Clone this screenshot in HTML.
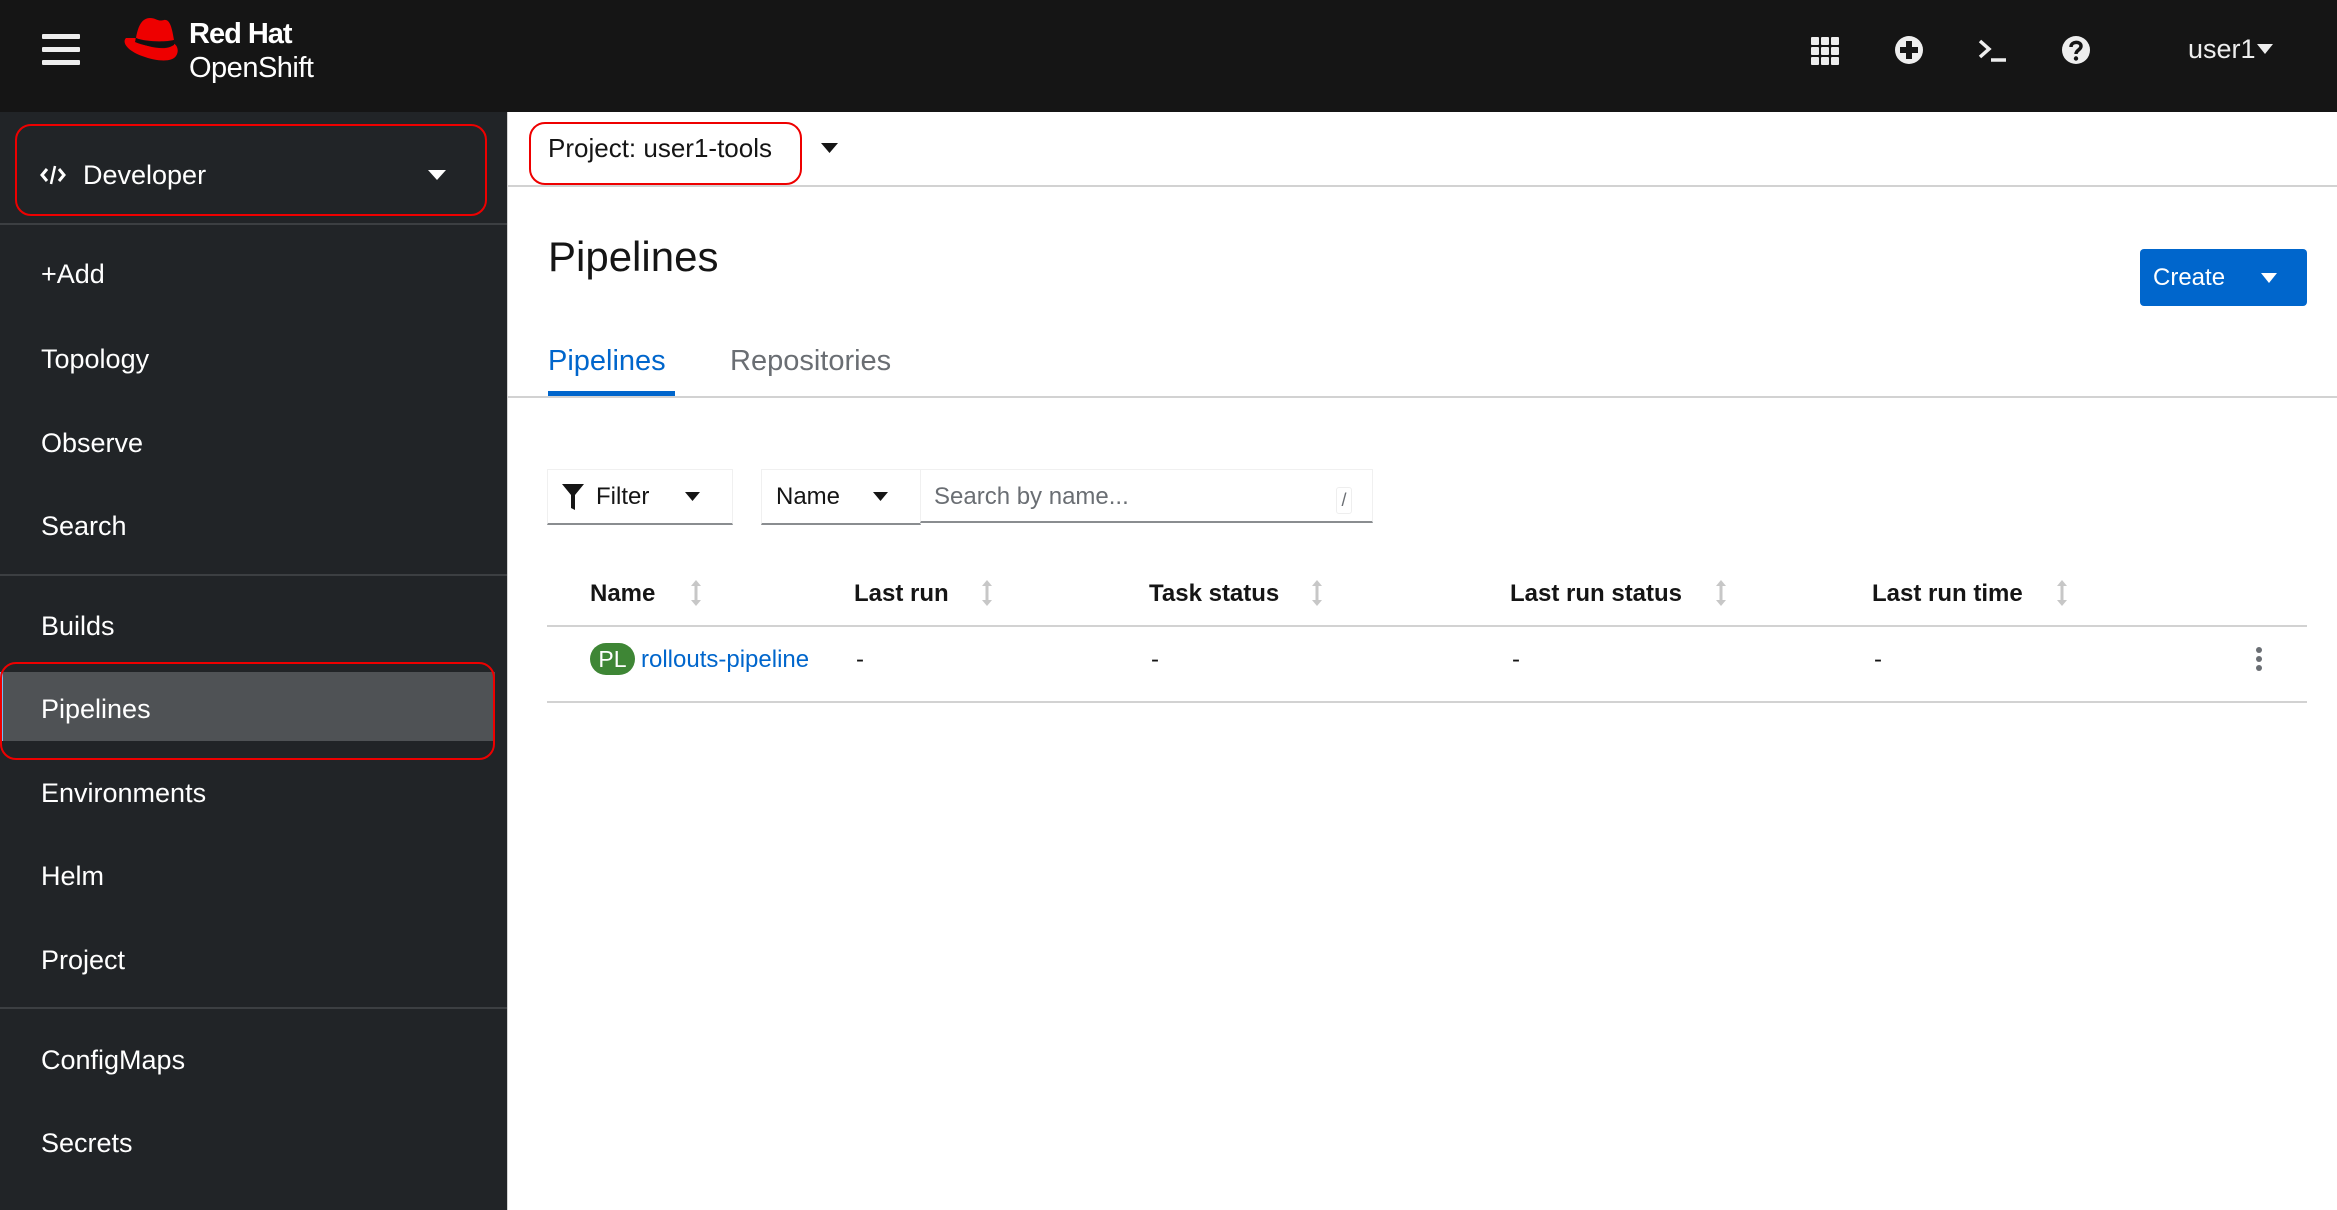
<!DOCTYPE html>
<html><head><meta charset="utf-8"><style>
*{box-sizing:border-box;margin:0;padding:0}
body{width:2337px;height:1210px;overflow:hidden;font-family:"Liberation Sans",sans-serif;background:#fff;position:relative;color:#151515}
.abs{position:absolute}
#top{left:0;top:0;width:2337px;height:112px;background:#151515}
#side{left:0;top:112px;width:507px;height:1098px;background:#212427}
.nav{position:absolute;left:41px;color:#fff;font-size:27px;line-height:34px;margin-top:3px}
.sep{position:absolute;left:0;width:507px;height:2px;background:#3c3f42}
.red{position:absolute;border:2px solid #e00;border-radius:16px}
.th{position:absolute;top:579px;font-size:24px;font-weight:bold;line-height:30px}
.sort{position:absolute;top:580px;width:10px;height:26px}
.td{position:absolute;top:645px;font-size:24px;line-height:30px}
</style></head><body>
<div id="top" class="abs">
  <div class="abs" style="left:42px;top:34px;width:38px;height:5px;background:#eee;border-radius:1px"></div>
  <div class="abs" style="left:42px;top:47px;width:38px;height:5px;background:#eee;border-radius:1px"></div>
  <div class="abs" style="left:42px;top:60px;width:38px;height:5px;background:#eee;border-radius:1px"></div>
  <svg class="abs" style="left:122px;top:16px" width="62" height="48" viewBox="0 0 62 48">
    <path d="M14 22 C16 10 20 2 28 2 C34 2 36 6 42 4 C48 3 50 12 52 24 C44 26 24 26 14 22Z" fill="#e00"/>
    <path d="M4 22 C0 26 4 34 20 40 C36 46 50 46 54 40 C58 34 54 28 52 28 C50 32 40 34 26 30 C16 27 12 24 14 22 Z" fill="#e00"/>
    <path d="M14 22 C24 27 44 28 52 24 L52 29 C44 33 24 31 13 26Z" fill="#111"/>
  </svg>
  <div class="abs" style="left:189px;top:18px;color:#fff;font-size:29px;font-weight:bold;letter-spacing:-1px;line-height:32px">Red Hat</div>
  <div class="abs" style="left:189px;top:52px;color:#fff;font-size:29px;letter-spacing:-0.5px;line-height:32px">OpenShift</div>
  <svg class="abs" style="left:1811px;top:37px" width="30" height="30" viewBox="0 0 30 30" fill="#eee">
    <rect x="0" y="0" width="8" height="8" rx="1"/><rect x="10" y="0" width="8" height="8" rx="1"/><rect x="20" y="0" width="8" height="8" rx="1"/>
    <rect x="0" y="10" width="8" height="8" rx="1"/><rect x="10" y="10" width="8" height="8" rx="1"/><rect x="20" y="10" width="8" height="8" rx="1"/>
    <rect x="0" y="20" width="8" height="8" rx="1"/><rect x="10" y="20" width="8" height="8" rx="1"/><rect x="20" y="20" width="8" height="8" rx="1"/>
  </svg>
  <svg class="abs" style="left:1894px;top:35px" width="30" height="30" viewBox="0 0 30 30"><circle cx="15" cy="15" r="14" fill="#eee"/><rect x="12" y="6" width="6" height="18" fill="#151515"/><rect x="6" y="12" width="18" height="6" fill="#151515"/></svg>
  <svg class="abs" style="left:1978px;top:38px" width="30" height="30" viewBox="0 0 30 30" fill="none" stroke="#eee" stroke-width="3.5"><path d="M2 3 L11 11 L2 19"/><path d="M13 22 H28"/></svg>
  <svg class="abs" style="left:2061px;top:35px" width="30" height="30" viewBox="0 0 30 30"><circle cx="15" cy="15" r="14" fill="#eee"/><path d="M10 12 C10 6 20 6 20 11 C20 15 15 15 15 19" stroke="#151515" stroke-width="3.5" fill="none"/><circle cx="15" cy="23.5" r="2.2" fill="#151515"/></svg>
  <div class="abs" style="left:2188px;top:33px;color:#eee;font-size:27px;line-height:32px">user1</div>
  <svg class="abs" style="left:2257px;top:44px" width="16" height="10"><path d="M0 0 H16 L8 10Z" fill="#eee"/></svg>
</div>
<div id="side" class="abs">
  <div class="red" style="left:15px;top:12px;width:472px;height:92px"></div>
  <svg class="abs" style="left:40px;top:53px" width="26" height="20" viewBox="0 0 26 20" fill="none" stroke="#fff" stroke-width="3"><path d="M7 4 L2 10 L7 16"/><path d="M19 4 L24 10 L19 16"/><path d="M15 1 L11 19" stroke-width="2.5"/></svg>
  <div class="nav" style="left:83px;top:43px">Developer</div>
  <svg class="abs" style="left:428px;top:58px" width="18" height="10"><path d="M0 0 H18 L9 10Z" fill="#fff"/></svg>
  <div class="sep" style="top:111px"></div>
  <div class="nav" style="top:142px">+Add</div>
  <div class="nav" style="top:227px">Topology</div>
  <div class="nav" style="top:311px">Observe</div>
  <div class="nav" style="top:394px">Search</div>
  <div class="sep" style="top:462px"></div>
  <div class="nav" style="top:494px">Builds</div>
  <div class="abs" style="left:0;top:560px;width:495px;height:69px;background:#4f5255"></div>
  <div class="abs" style="left:0;top:560px;width:3px;height:69px;background:#73bcf7"></div>
  <div class="red" style="left:0;top:550px;width:495px;height:98px"></div>
  <div class="nav" style="top:577px">Pipelines</div>
  <div class="nav" style="top:661px">Environments</div>
  <div class="nav" style="top:744px">Helm</div>
  <div class="nav" style="top:828px">Project</div>
  <div class="sep" style="top:895px"></div>
  <div class="nav" style="top:928px">ConfigMaps</div>
  <div class="nav" style="top:1011px">Secrets</div>
</div>
<div class="abs" style="left:507px;top:112px;width:1830px;height:1098px;border-left:1px solid #d2d2d2"></div>
<div class="abs" style="left:507px;top:185px;width:1830px;height:2px;background:#d2d2d2"></div>
<div class="red" style="left:529px;top:122px;width:273px;height:63px"></div>
<div class="abs" style="left:548px;top:132px;font-size:26px;line-height:32px">Project: user1-tools</div>
<svg class="abs" style="left:821px;top:143px" width="17" height="10"><path d="M0 0 H17 L8.5 10Z" fill="#151515"/></svg>
<div class="abs" style="left:548px;top:233px;font-size:42px;line-height:48px">Pipelines</div>
<div class="abs" style="left:2140px;top:249px;width:167px;height:57px;background:#0066cc;border-radius:4px"></div>
<div class="abs" style="left:2153px;top:263px;color:#fff;font-size:24px;line-height:30px">Create</div>
<svg class="abs" style="left:2261px;top:273px" width="16" height="10"><path d="M0 0 H16 L8 10Z" fill="#fff"/></svg>
<div class="abs" style="left:548px;top:344px;font-size:29px;line-height:34px;color:#0066cc">Pipelines</div>
<div class="abs" style="left:730px;top:344px;font-size:29px;line-height:34px;color:#6a6e73">Repositories</div>
<div class="abs" style="left:507px;top:396px;width:1830px;height:2px;background:#d2d2d2"></div>
<div class="abs" style="left:548px;top:391px;width:127px;height:5px;background:#0066cc"></div>
<div class="abs" style="left:547px;top:469px;width:186px;height:56px;border:1px solid #f0f0f0;border-bottom:2px solid #8a8d90"></div>
<svg class="abs" style="left:562px;top:484px" width="22" height="26" viewBox="0 0 22 26"><path d="M0 0 H22 L13 11 V26 L9 24 V11Z" fill="#151515"/></svg>
<div class="abs" style="left:596px;top:482px;font-size:24px;line-height:30px">Filter</div>
<svg class="abs" style="left:685px;top:492px" width="15" height="9"><path d="M0 0 H15 L7.5 9Z" fill="#151515"/></svg>
<div class="abs" style="left:761px;top:469px;width:160px;height:56px;border:1px solid #f0f0f0;border-bottom:2px solid #8a8d90"></div>
<div class="abs" style="left:776px;top:482px;font-size:24px;line-height:30px">Name</div>
<svg class="abs" style="left:873px;top:492px" width="15" height="9"><path d="M0 0 H15 L7.5 9Z" fill="#151515"/></svg>
<div class="abs" style="left:920px;top:469px;width:453px;height:54px;border:1px solid #f0f0f0;border-bottom:2px solid #8a8d90"></div>
<div class="abs" style="left:934px;top:482px;font-size:24px;line-height:30px;color:#6a6e73">Search by name...</div>
<div class="abs" style="left:1336px;top:487px;width:16px;height:27px;border:1px solid #eee;border-radius:3px;font-size:18px;color:#6a6e73;text-align:center;line-height:25px">/</div>
<div class="th" style="left:590px">Name</div>
<div class="th" style="left:854px">Last run</div>
<div class="th" style="left:1149px">Task status</div>
<div class="th" style="left:1510px">Last run status</div>
<div class="th" style="left:1872px">Last run time</div>
<svg class="sort" style="left:691px" viewBox="0 0 10 26"><path d="M5 0 L10 6 H6.5 V20 H10 L5 26 L0 20 H3.5 V6 H0Z" fill="#c7c7c7"/></svg>
<svg class="sort" style="left:982px" viewBox="0 0 10 26"><path d="M5 0 L10 6 H6.5 V20 H10 L5 26 L0 20 H3.5 V6 H0Z" fill="#c7c7c7"/></svg>
<svg class="sort" style="left:1312px" viewBox="0 0 10 26"><path d="M5 0 L10 6 H6.5 V20 H10 L5 26 L0 20 H3.5 V6 H0Z" fill="#c7c7c7"/></svg>
<svg class="sort" style="left:1716px" viewBox="0 0 10 26"><path d="M5 0 L10 6 H6.5 V20 H10 L5 26 L0 20 H3.5 V6 H0Z" fill="#c7c7c7"/></svg>
<svg class="sort" style="left:2057px" viewBox="0 0 10 26"><path d="M5 0 L10 6 H6.5 V20 H10 L5 26 L0 20 H3.5 V6 H0Z" fill="#c7c7c7"/></svg>
<div class="abs" style="left:547px;top:625px;width:1760px;height:2px;background:#d2d2d2"></div>
<div class="abs" style="left:590px;top:643px;width:45px;height:32px;background:#3e8635;border-radius:16px;color:#fff;font-size:23px;line-height:32px;text-align:center">PL</div>
<div class="td" style="left:641px;color:#0066cc">rollouts-pipeline</div>
<div class="td" style="left:856px">-</div>
<div class="td" style="left:1151px">-</div>
<div class="td" style="left:1512px">-</div>
<div class="td" style="left:1874px">-</div>
<svg class="abs" style="left:2255px;top:646px" width="8" height="26"><circle cx="4" cy="4" r="3" fill="#6a6e73"/><circle cx="4" cy="13" r="3" fill="#6a6e73"/><circle cx="4" cy="22" r="3" fill="#6a6e73"/></svg>
<div class="abs" style="left:547px;top:701px;width:1760px;height:2px;background:#d2d2d2"></div>
</body></html>
